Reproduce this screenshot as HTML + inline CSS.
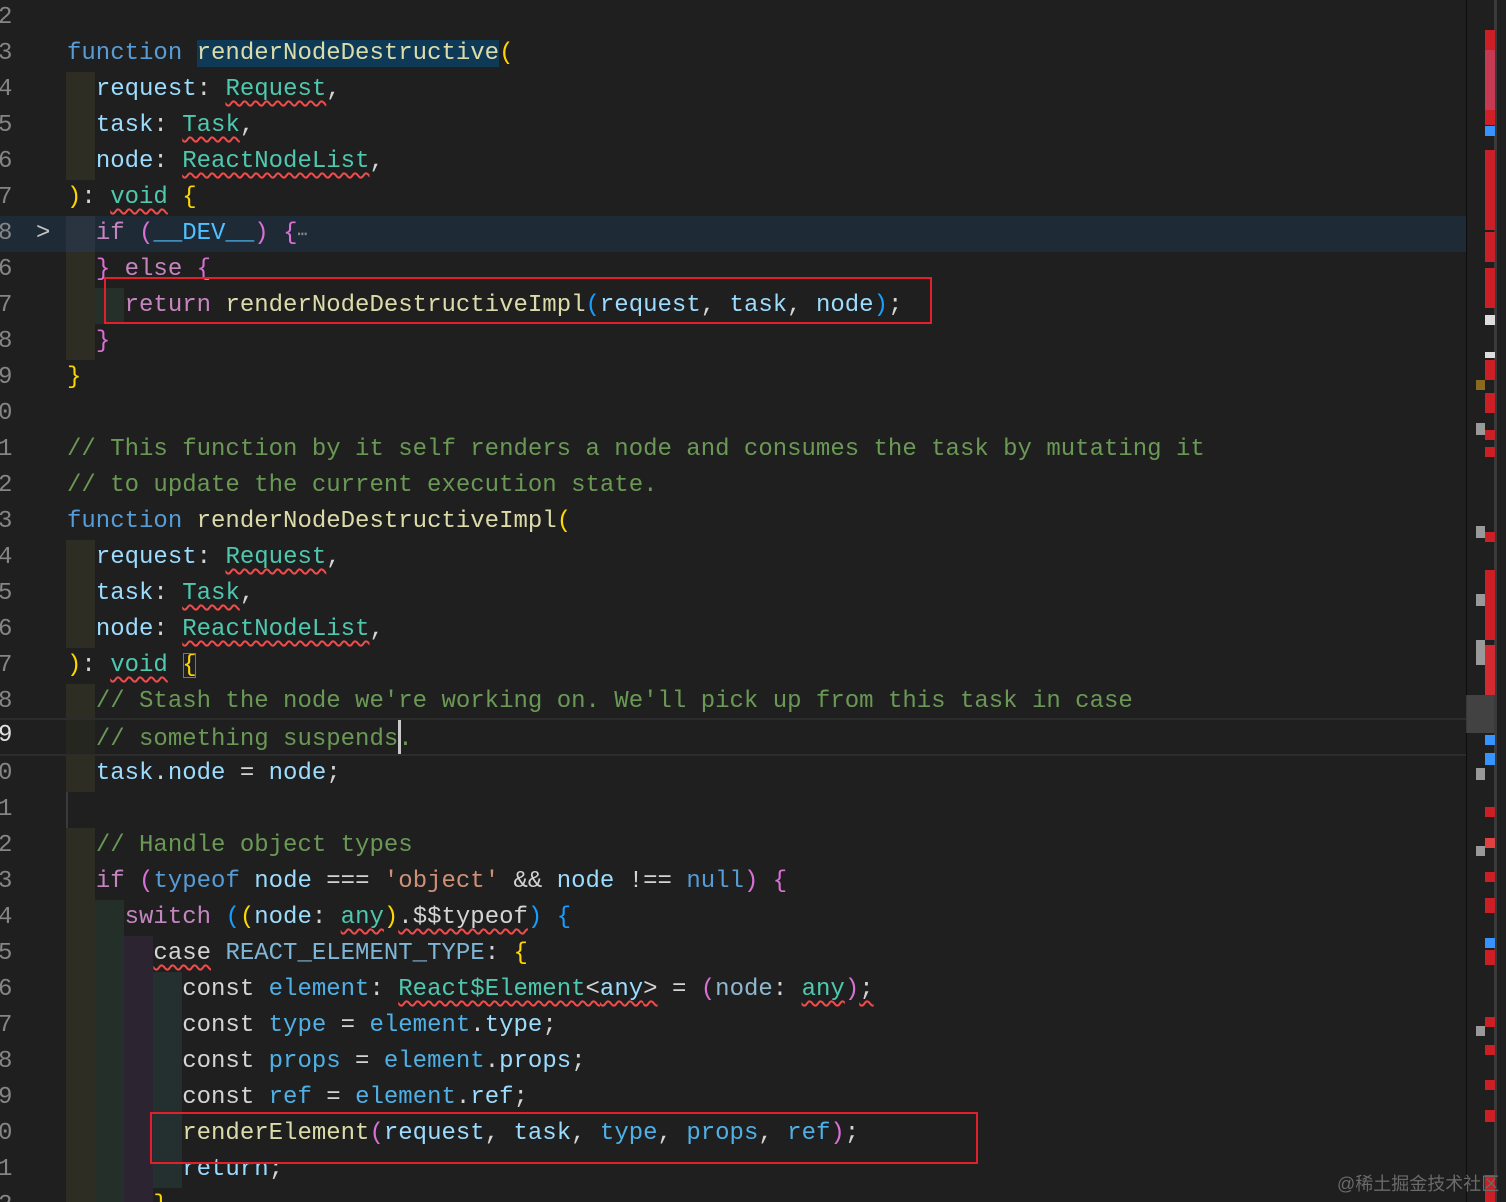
<!DOCTYPE html>
<html style="overflow:hidden;height:1202px"><head><meta charset="utf-8"><style>
body{margin:0;width:1506px;height:1202px;background:#1f1f1f;overflow:hidden;position:relative;font-family:"Liberation Mono",monospace;font-size:24px;}
#w{position:absolute;left:0;top:3px;width:1466px;height:1199px;overflow:hidden;}
.l{position:absolute;left:0;height:36px;line-height:36px;white-space:pre;width:1466px;}
.n{position:absolute;left:-2px;color:#858585;}
.c{position:absolute;left:67px;color:#d4d4d4;}
.g{position:absolute;top:0;height:36px;width:29px;}
.g1{left:66px;background:#2d2d23;}
.g2{left:95px;background:#232f28;}
.g3{left:124px;background:#2c2531;}
.g4{left:153px;background:#243030;}
.k{color:#569cd6}.f{color:#dcdcaa}.p{color:#9cdcfe}.t{color:#4ec9b0}.ct{color:#c586c0}
.y{color:#ffd700}.m{color:#da70d6}.b{color:#179fff}.cm{color:#6a9955}.s{color:#ce9178}.cn{color:#4fc1ff}
.w{text-decoration:underline wavy #f14c4c;text-decoration-thickness:1.5px;text-underline-offset:5px;}
.box{position:absolute;border:2px solid #e0202a;}
.mk{position:absolute;width:10px;}
</style></head><body>
<div id="w">
<div class="l" style="top:-3px"><span class="n">2</span></div>
<div class="l" style="top:33px"><span class="n">3</span><span class="c"><span class="k">function</span> <span class="f" style="background:#0f3a57">renderNodeDestructive</span><span class="y">(</span></span></div>
<div class="l" style="top:69px"><span class="g g1"></span><span class="n">4</span><span class="c">  <span class="p">request</span>: <span class="t w">Request</span>,</span></div>
<div class="l" style="top:105px"><span class="g g1"></span><span class="n">5</span><span class="c">  <span class="p">task</span>: <span class="t w">Task</span>,</span></div>
<div class="l" style="top:141px"><span class="g g1"></span><span class="n">6</span><span class="c">  <span class="p">node</span>: <span class="t w">ReactNodeList</span>,</span></div>
<div class="l" style="top:177px"><span class="n">7</span><span class="c"><span class="y">)</span>: <span class="t w">void</span> <span class="y">{</span></span></div>
<div class="l" style="top:213px;background:#1f2a37"><span class="g g1" style="background:#2a3440"></span><span class="n">8</span><span style="position:absolute;left:36px;color:#c5c5c5">&gt;</span><span class="c">  <span class="ct">if</span> <span class="m">(</span><span class="cn">__DEV__</span><span class="m">)</span> <span class="m">{</span><span style="color:#8a8a8a;font-size:16px">⋯</span></span></div>
<div class="l" style="top:249px"><span class="g g1"></span><span class="n">6</span><span class="c">  <span class="m">}</span> <span class="ct">else</span> <span class="m">{</span></span></div>
<div class="l" style="top:285px"><span class="g g1"></span><span class="g g2" style="background:#26302a"></span><span class="n">7</span><span class="c">    <span class="ct">return</span> <span class="f">renderNodeDestructiveImpl</span><span class="b">(</span><span class="p">request</span>, <span class="p">task</span>, <span class="p">node</span><span class="b">)</span>;</span></div>
<div class="l" style="top:321px"><span class="g g1"></span><span class="n">8</span><span class="c">  <span class="m">}</span></span></div>
<div class="l" style="top:357px"><span class="n">9</span><span class="c"><span class="y">}</span></span></div>
<div class="l" style="top:393px"><span class="n">0</span></div>
<div class="l" style="top:429px"><span class="n">1</span><span class="c cm">// This function by it self renders a node and consumes the task by mutating it</span></div>
<div class="l" style="top:465px"><span class="n">2</span><span class="c cm">// to update the current execution state.</span></div>
<div class="l" style="top:501px"><span class="n">3</span><span class="c"><span class="k">function</span> <span class="f">renderNodeDestructiveImpl</span><span class="y">(</span></span></div>
<div class="l" style="top:537px"><span class="g g1"></span><span class="n">4</span><span class="c">  <span class="p">request</span>: <span class="t w">Request</span>,</span></div>
<div class="l" style="top:573px"><span class="g g1"></span><span class="n">5</span><span class="c">  <span class="p">task</span>: <span class="t w">Task</span>,</span></div>
<div class="l" style="top:609px"><span class="g g1"></span><span class="n">6</span><span class="c">  <span class="p">node</span>: <span class="t w">ReactNodeList</span>,</span></div>
<div class="l" style="top:645px"><span class="n">7</span><span class="c"><span class="y">)</span>: <span class="t w">void</span> <span class="y" style="outline:1.5px solid #777;outline-offset:-2px">{</span></span></div>
<div class="l" style="top:681px"><span class="g g1"></span><span class="n">8</span><span class="c">  <span class="cm">// Stash the node we're working on. We'll pick up from this task in case</span></span></div>
<div class="l" style="top:715px;border-top:2px solid #2c2c2c;border-bottom:2px solid #2c2c2c;height:34px;line-height:32px"><span class="g g1" style="height:34px;background:#262620"></span><span class="n" style="color:#e0e0e0">9</span><span class="c">  <span class="cm">// something suspends</span><span style="display:inline-block;width:3px;height:34px;background:#c8c8c8;vertical-align:-9px;margin-right:-3px"></span><span class="cm">.</span></span></div>
<div class="l" style="top:753px"><span class="g g1"></span><span class="n">0</span><span class="c">  <span class="p">task</span>.<span class="p">node</span> = <span class="p">node</span>;</span></div>
<div class="l" style="top:789px"><span class="n">1</span><span style="position:absolute;left:66px;top:0;width:2px;height:36px;background:#3a3a3a"></span></div>
<div class="l" style="top:825px"><span class="g g1"></span><span class="n">2</span><span class="c">  <span class="cm">// Handle object types</span></span></div>
<div class="l" style="top:861px"><span class="g g1"></span><span class="n">3</span><span class="c">  <span class="ct">if</span> <span class="m">(</span><span class="k">typeof</span> <span class="p">node</span> === <span class="s">'object'</span> &amp;&amp; <span class="p">node</span> !== <span class="k">null</span><span class="m">)</span> <span class="m">{</span></span></div>
<div class="l" style="top:897px"><span class="g g1"></span><span class="g g2"></span><span class="n">4</span><span class="c">    <span class="ct">switch</span> <span class="b">(</span><span class="y">(</span><span class="p">node</span>: <span class="t w">any</span><span class="y">)</span><span class="w">.$$typeof</span><span class="b">)</span> <span class="b">{</span></span></div>
<div class="l" style="top:933px"><span class="g g1"></span><span class="g g2"></span><span class="g g3"></span><span class="n">5</span><span class="c">      <span class="w">case</span> <span class="cn" style="color:#7fb5d5">REACT_ELEMENT_TYPE</span>: <span class="y">{</span></span></div>
<div class="l" style="top:969px"><span class="g g1"></span><span class="g g2"></span><span class="g g3"></span><span class="g g4"></span><span class="n">6</span><span class="c">        const <span class="p" style="color:#4fb0e6">element</span>: <span class="w"><span class="t">React$Element</span>&lt;<span class="p">any</span>&gt;</span> = <span class="m">(</span><span class="p" style="color:#8fb8d0">node</span>: <span class="t w">any</span><span class="m">)</span><span class="w">;</span></span></div>
<div class="l" style="top:1005px"><span class="g g1"></span><span class="g g2"></span><span class="g g3"></span><span class="g g4"></span><span class="n">7</span><span class="c">        const <span class="cn" style="color:#4fb0e6">type</span> = <span class="cn" style="color:#4fb0e6">element</span>.<span class="p">type</span>;</span></div>
<div class="l" style="top:1041px"><span class="g g1"></span><span class="g g2"></span><span class="g g3"></span><span class="g g4"></span><span class="n">8</span><span class="c">        const <span class="cn" style="color:#4fb0e6">props</span> = <span class="cn" style="color:#4fb0e6">element</span>.<span class="p">props</span>;</span></div>
<div class="l" style="top:1077px"><span class="g g1"></span><span class="g g2"></span><span class="g g3"></span><span class="g g4"></span><span class="n">9</span><span class="c">        const <span class="cn" style="color:#4fb0e6">ref</span> = <span class="cn" style="color:#4fb0e6">element</span>.<span class="p">ref</span>;</span></div>
<div class="l" style="top:1113px"><span class="g g1"></span><span class="g g2"></span><span class="g g3"></span><span class="g g4"></span><span class="n">0</span><span class="c">        <span class="f">renderElement</span><span class="m">(</span><span class="p">request</span>, <span class="p">task</span>, <span class="cn" style="color:#4fb0e6">type</span>, <span class="cn" style="color:#4fb0e6">props</span>, <span class="cn" style="color:#4fb0e6">ref</span><span class="m">)</span>;</span></div>
<div class="l" style="top:1149px"><span class="g g1"></span><span class="g g2"></span><span class="g g3"></span><span class="g g4"></span><span class="n">1</span><span class="c">        <span class="p">return</span>;</span></div>
<div class="l" style="top:1185px"><span class="g g1"></span><span class="g g2"></span><span class="g g3"></span><span class="n">2</span><span class="c">      <span class="y">}</span></span></div>
</div>

<div class="box" style="left:104px;top:277px;width:824px;height:43px"></div>
<div class="box" style="left:150px;top:1112px;width:824px;height:48px"></div>

<div style="position:absolute;left:1466px;top:0;width:1px;height:1202px;background:#0c0c0c"></div>
<div style="position:absolute;left:1494px;top:0;width:3px;height:1202px;background:#3a3a3a"></div>
<div style="position:absolute;left:1466px;top:695px;width:28px;height:38px;background:rgba(120,120,120,0.4)"></div>
<div class="mk" style="left:1485px;top:30px;height:20px;background:#cc1f25"></div>
<div class="mk" style="left:1485px;top:50px;height:60px;background:#c53a52"></div>
<div class="mk" style="left:1485px;top:110px;height:15px;background:#d01f25"></div>
<div class="mk" style="left:1485px;top:126px;height:10px;background:#3794ff"></div>
<div class="mk" style="left:1485px;top:150px;height:80px;background:#c81f28"></div>
<div class="mk" style="left:1485px;top:232px;height:30px;background:#c81f28"></div>
<div class="mk" style="left:1485px;top:268px;height:40px;background:#cc1f25"></div>
<div class="mk" style="left:1485px;top:315px;height:10px;background:#ddd"></div>
<div class="mk" style="left:1485px;top:352px;height:6px;background:#ddd"></div>
<div class="mk" style="left:1485px;top:360px;height:20px;background:#cc1f25"></div>
<div class="mk" style="left:1476px;top:380px;width:9px;height:10px;background:#8a6a20"></div>
<div class="mk" style="left:1485px;top:393px;height:20px;background:#cc1f25"></div>
<div class="mk" style="left:1476px;top:423px;width:9px;height:12px;background:#999"></div>
<div class="mk" style="left:1485px;top:430px;height:10px;background:#cc1f25"></div>
<div class="mk" style="left:1485px;top:447px;height:10px;background:#cc1f25"></div>
<div class="mk" style="left:1476px;top:526px;width:9px;height:12px;background:#999"></div>
<div class="mk" style="left:1485px;top:532px;height:10px;background:#cc1f25"></div>
<div class="mk" style="left:1476px;top:594px;width:9px;height:12px;background:#999"></div>
<div class="mk" style="left:1485px;top:570px;height:70px;background:#cc1f25"></div>
<div class="mk" style="left:1476px;top:640px;width:9px;height:25px;background:#999"></div>
<div class="mk" style="left:1485px;top:645px;height:50px;background:#d22a30"></div>
<div class="mk" style="left:1476px;top:768px;width:9px;height:12px;background:#999"></div>
<div class="mk" style="left:1485px;top:735px;height:10px;background:#3794ff"></div>
<div class="mk" style="left:1485px;top:753px;height:12px;background:#3794ff"></div>
<div class="mk" style="left:1485px;top:807px;height:10px;background:#cc1f25"></div>
<div class="mk" style="left:1485px;top:838px;height:10px;background:#e04040"></div>
<div class="mk" style="left:1476px;top:846px;width:9px;height:10px;background:#999"></div>
<div class="mk" style="left:1485px;top:872px;height:10px;background:#cc1f25"></div>
<div class="mk" style="left:1485px;top:898px;height:15px;background:#cc1f25"></div>
<div class="mk" style="left:1485px;top:938px;height:10px;background:#3794ff"></div>
<div class="mk" style="left:1485px;top:950px;height:15px;background:#cc1f25"></div>
<div class="mk" style="left:1476px;top:1026px;width:9px;height:10px;background:#999"></div>
<div class="mk" style="left:1485px;top:1017px;height:10px;background:#cc1f25"></div>
<div class="mk" style="left:1485px;top:1045px;height:10px;background:#cc1f25"></div>
<div class="mk" style="left:1485px;top:1080px;height:10px;background:#cc1f25"></div>
<div class="mk" style="left:1485px;top:1110px;height:12px;background:#cc1f25"></div>
<div class="mk" style="left:1485px;top:1175px;height:27px;background:#cc1f25"></div>

<div style="position:absolute;left:1337px;top:1170px;font-family:'Liberation Sans','Noto Sans CJK SC',sans-serif;font-size:18px;color:#6a6a6a">@稀土掘金技术社区</div>
</body></html>
